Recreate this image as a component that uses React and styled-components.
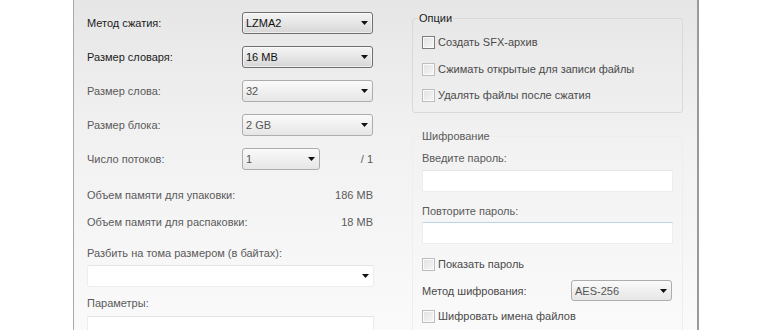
import styled, { createGlobalStyle } from 'styled-components'

const GlobalStyle = createGlobalStyle`
  html, body {
    margin: 0;
    padding: 0;
    background: #ffffff;
  }
  body {
    font-family: "Liberation Sans", Arial, sans-serif;
    font-size: 11px;
    color: #555;
  }
`

const Page = styled.div`
  width: 770px;
  height: 330px;
  overflow: hidden;
  background: #fff;
`

const Dialog = styled.div`
  margin-left: 73px;
  width: 610px;
  height: 330px;
  border-left: 1px solid #a9a9a9;
  border-right: 2px solid #9a9a9a;
  background: linear-gradient(180deg, #e6e6e6 0%, #f1f1f1 40%, #fafafa 100%);
  display: flex;
  gap: 39px;
  padding: 0 0 0 13px;
  box-sizing: content-box;
  overflow: hidden;
`

const LeftCol = styled.div`
  width: 286px;
  display: flex;
  flex-direction: column;
  padding-top: 12px;
`

const FieldRow = styled.div`
  display: flex;
  align-items: center;
  height: 22px;
  margin-bottom: 12px;
`

const Label = styled.div`
  width: ${p => p.$w || 155}px;
  flex-shrink: 0;
  color: ${p => (p.$strong ? '#1c1c1c' : '#5a5a5a')};
  white-space: nowrap;
`

const SelectBox = styled.div`
  width: ${p => p.$w}px;
  height: ${p => p.$h || 22}px;
  box-sizing: border-box;
  border: 1px solid ${p => (p.$dark ? '#6f6f6f' : p.$flat ? '#ececec' : '#adadad')};
  border-radius: ${p => (p.$flat ? 1 : 3)}px;
  background: ${p =>
    p.$dark
      ? 'linear-gradient(180deg, #f4f4f4 0%, #e6e6e6 50%, #d6d6d6 100%)'
      : p.$flat
        ? '#ffffff'
        : 'linear-gradient(180deg, #fafafa 0%, #f0f0f0 50%, #e6e6e6 100%)'};
  box-shadow: ${p => (p.$dark ? 'inset 0 0 0 1px rgba(255,255,255,0.6)' : 'none')};
  display: flex;
  align-items: center;
  justify-content: space-between;
  padding: 0 4px 0 3px;
  color: ${p => (p.$dark ? '#111' : '#555')};
  flex-shrink: 0;
`

const Arrow = () => (
  <svg width="7" height="4" viewBox="0 0 7 4">
    <path d="M0 0h7L3.5 4z" fill="#111" />
  </svg>
)

const Select = ({ w, h, dark, flat, value }) => (
  <SelectBox $w={w} $h={h} $dark={dark} $flat={flat}>
    <span>{value}</span>
    <Arrow />
  </SelectBox>
)

const Suffix = styled.div`
  flex: 1;
  text-align: right;
  color: #5a5a5a;
`

const InfoRow = styled.div`
  display: flex;
  justify-content: space-between;
  height: 16px;
  line-height: 16px;
  margin-top: ${p => p.$mt}px;
  color: #5a5a5a;
`

const TextLine = styled.div`
  height: 16px;
  line-height: 16px;
  margin-top: ${p => p.$mt}px;
  color: #5a5a5a;
`

const Field = styled.div`
  width: ${p => p.$w}px;
  height: 22px;
  box-sizing: border-box;
  margin-top: ${p => p.$mt}px;
  background: #fff;
  border: 1px solid #ededed;
  border-top-color: ${p => (p.$focus ? '#bcd3e6' : '#e4e4e4')};
  flex-shrink: 0;
`

const RightCol = styled.div`
  width: 271px;
  display: flex;
  flex-direction: column;
  padding-top: 10px;
`

const Group = styled.fieldset`
  margin: 0;
  padding: ${p => p.$pad};
  border: 1px solid ${p => p.$border};
  border-radius: 3px;
  min-width: 0;
  display: flex;
  flex-direction: column;
  margin-top: ${p => p.$mt || 0}px;
  height: ${p => p.$h}px;
  box-sizing: border-box;
  flex-shrink: 0;
`

const Legend = styled.legend`
  padding: 0 1px;
  margin-left: ${p => p.$ml}px;
  height: 16px;
  line-height: 16px;
  color: ${p => p.$color};
`

const CheckRow = styled.div`
  display: flex;
  align-items: center;
  height: 16px;
  gap: 3px;
  margin-top: ${p => p.$mt}px;
  color: #4a4a4a;
`

const Box = styled.span`
  width: 13px;
  height: 13px;
  box-sizing: border-box;
  border: 1px solid ${p => (p.$dark ? '#7d7d7d' : '#bdbdbd')};
  background: linear-gradient(135deg, #e2e2e2 0%, #f6f6f6 100%);
  box-shadow: inset 0 0 0 1px #fbfbfb;
  flex-shrink: 0;
`

const Check = ({ dark, mt, children }) => (
  <CheckRow $mt={mt}>
    <Box $dark={dark} />
    <span>{children}</span>
  </CheckRow>
)

const EncRow = styled.div`
  display: flex;
  align-items: center;
  justify-content: space-between;
  width: 250px;
  margin-top: ${p => p.$mt}px;
  color: #4a4a4a;
`

const App = () => (
  <Page>
    <GlobalStyle />
    <Dialog>
      <LeftCol>
        <FieldRow>
          <Label $strong>Метод сжатия:</Label>
          <Select w={131} dark value="LZMA2" />
        </FieldRow>
        <FieldRow>
          <Label $strong>Размер словаря:</Label>
          <Select w={131} dark value="16 MB" />
        </FieldRow>
        <FieldRow>
          <Label>Размер слова:</Label>
          <Select w={131} value="32" />
        </FieldRow>
        <FieldRow>
          <Label>Размер блока:</Label>
          <Select w={131} value="2 GB" />
        </FieldRow>
        <FieldRow>
          <Label>Число потоков:</Label>
          <Select w={78} value="1" />
          <Suffix>/ 1</Suffix>
        </FieldRow>
        <InfoRow $mt={5}>
          <span>Объем памяти для упаковки:</span>
          <span>186 MB</span>
        </InfoRow>
        <InfoRow $mt={11}>
          <span>Объем памяти для распаковки:</span>
          <span>18 MB</span>
        </InfoRow>
        <TextLine $mt={15}>Разбить на тома размером (в байтах):</TextLine>
        <Field as={SelectBox} $w={287} $flat $mt={4}>
          <span />
          <Arrow />
        </Field>
        <TextLine $mt={8}>Параметры:</TextLine>
        <Field $w={287} $mt={5} />
      </LeftCol>

      <RightCol>
        <Group $border="#d9d9d9" $pad="0 0 0 9px" $h={103}>
          <Legend $ml={-4} $color="#1c1c1c">Опции</Legend>
          <Check dark mt={8}>Создать SFX-архив</Check>
          <Check mt={11}>Сжимать открытые для записи файлы</Check>
          <Check mt={10}>Удалять файлы после сжатия</Check>
        </Group>
        <Group $border="#eeeeee" $pad="0 0 0 9px" $mt={15} $h={240}>
          <Legend $ml={-1} $color="#5a5a5a">Шифрование</Legend>
          <TextLine $mt={6}>Введите пароль:</TextLine>
          <Field $w={251} $mt={4} />
          <TextLine $mt={11}>Повторите пароль:</TextLine>
          <Field $w={251} $mt={3} $focus />
          <Check mt={12}>Показать пароль</Check>
          <EncRow $mt={8}>
            <span>Метод шифрования:</span>
            <Select w={101} h={21} value="AES-256" />
          </EncRow>
          <Check mt={7}>Шифровать имена файлов</Check>
        </Group>
      </RightCol>
    </Dialog>
  </Page>
)

export default App
